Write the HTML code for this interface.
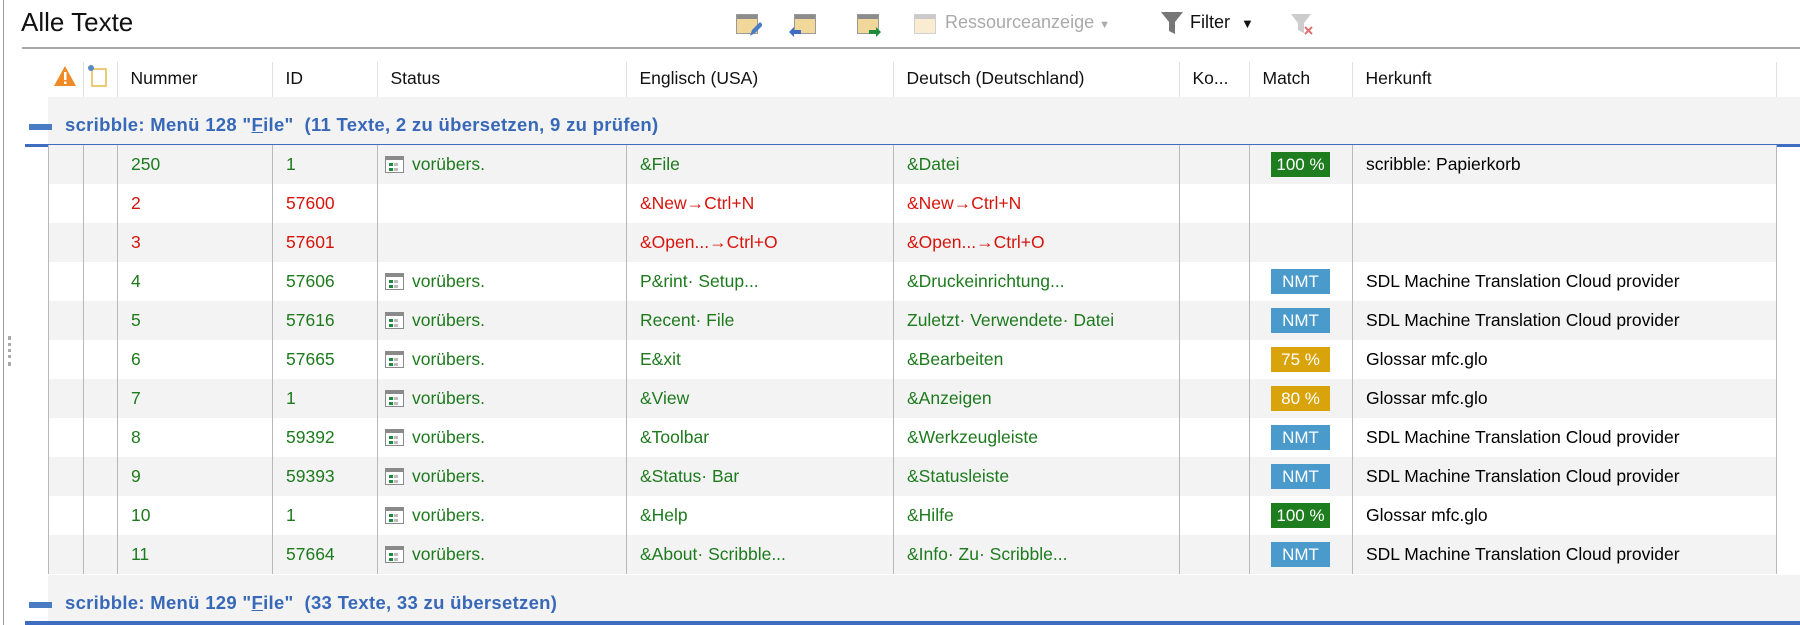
<!DOCTYPE html>
<html><head><meta charset="utf-8"><style>
*{margin:0;padding:0;box-sizing:border-box}
body{width:1800px;height:625px;background:#fff;font-family:"Liberation Sans",Arial,sans-serif;position:relative;overflow:hidden;color:#000}
.abs{position:absolute}
.title{left:21px;top:7px;font-size:26px;white-space:nowrap;color:#111}
.sep{left:22px;top:47px;width:1778px;height:2px;background:#a8a8a8}
.lb{left:3px;top:0;width:1px;height:625px;background:#9a9a9a}
.tb{top:12px;font-size:18px;white-space:nowrap}
table{position:absolute;left:48px;top:50px;border-collapse:collapse;table-layout:fixed;font-size:17.5px}
td{white-space:nowrap;overflow:hidden;padding-left:13px;vertical-align:middle}
tr.r td{height:39px;border-right:1px solid #b8b8b8;color:#1d7a1d}
tr.r td:first-child{border-left:1px solid #b8b8b8}
tr.r.red td{color:#d7140c}
tr.r:nth-child(odd) td{background:#f3f3f3}
tr.h td{height:47px;color:#111;font-size:17.5px;position:relative;padding-top:10px}
.hs{position:absolute;right:0;top:12px;width:1px;height:35px;background:#e0e0e0}
.grp{position:absolute;left:48px;width:1752px;height:48px;background:#f3f3f3}
.gline{position:absolute;left:25px;width:1775px;height:3px;background:#3d6cc0}
.gmin{position:absolute;left:29px;width:23px;height:6px;background:#4a7cc4}
.gtxt{position:absolute;left:65px;font-size:18.5px;font-weight:bold;color:#3868b8;white-space:nowrap;letter-spacing:0.3px}
.st{display:inline-block;width:19px;height:17px;border:1px solid #8a8a8a;background:#fff;vertical-align:-3px;margin-right:8px;position:relative;margin-left:-6px}
.st:before{content:"";position:absolute;left:0;top:0;width:17px;height:3px;background:#8a8a8a}
.st:after{content:"";position:absolute;left:3px;top:6px;width:4px;height:3px;background:#1d8a3d;box-shadow:5px 0 0 #bbb,0 5px 0 #1d8a3d,5px 5px 0 #bbb}
.b{display:inline-block;width:59px;height:25px;line-height:25px;text-align:center;color:#fff;font-size:17px;margin-left:8px}
.g{background:#1e7d1e}.n{background:#4a9bcc}.y{background:#d9a30c}
.ic{position:absolute;top:14px;width:22px;height:20px;border:1px solid #999;background:#f2d79a}
.ic:before{content:"";position:absolute;left:0;top:0;width:20px;height:4px;background:#8c8c8c}
</style></head><body>
<div class="abs lb"></div>
<div class="abs title">Alle Texte</div>
<div class="abs sep"></div>
<div class="ic" style="left:736px"></div>
<svg class="abs" style="left:748px;top:20px" width="14" height="18"><path d="M2 16l2-6 8-8 3 3-8 8z" fill="#4a7cc4"/></svg>
<div class="ic" style="left:794px"></div>
<svg class="abs" style="left:788px;top:26px" width="14" height="12"><path d="M1 6l5-5v3h7v4H6v3z" fill="#3d6cc0"/></svg>
<div class="ic" style="left:857px"></div>
<svg class="abs" style="left:868px;top:26px" width="14" height="12"><path d="M13 6l-5-5v3H1v4h7v3z" fill="#1d8a3d"/></svg>
<div class="ic" style="left:914px;top:14px;opacity:.45"></div>
<div class="abs tb" style="left:945px;color:#aaa">Ressourceanzeige <span style="font-size:11px">▼</span></div>
<svg class="abs" style="left:1160px;top:10px" width="24" height="26"><path d="M1 2h22l-8 10v12l-6-3v-9z" fill="#777"/></svg>
<div class="abs tb" style="left:1190px;color:#111">Filter <span style="font-size:13px;margin-left:6px">▼</span></div>
<svg class="abs" style="left:1290px;top:12px" width="26" height="26"><path d="M1 2h20l-7 9v10l-6-3v-7z" fill="#ccc"/><path d="M15 15l7 7M22 15l-7 7" stroke="#e07070" stroke-width="2"/></svg>
<div class="abs" style="left:8px;top:336px;width:3px;height:30px;border-left:3px dotted #aaa"></div>

<div class="grp" style="top:97px"></div>
<div class="gtxt" style="top:114px">scribble: Menü 128 "<u>F</u>ile"&nbsp; (11 Texte, 2 zu übersetzen, 9 zu prüfen)</div>
<div class="gmin" style="top:124px"></div>
<div class="gline" style="top:144px"></div>

<div class="grp" style="top:575px"></div>
<div class="gtxt" style="top:592px">scribble: Menü 129 "<u>F</u>ile"&nbsp; (33 Texte, 33 zu übersetzen)</div>
<div class="gmin" style="top:602px"></div>
<div class="gline" style="top:621px;height:4px"></div>

<table>
<colgroup><col style="width:35px"><col style="width:34px"><col style="width:155px"><col style="width:105px"><col style="width:249px"><col style="width:267px"><col style="width:286px"><col style="width:70px"><col style="width:103px"><col style="width:424px"></colgroup>
<tr class="h">
<td style="padding-left:4px"><svg width="24" height="22"><path d="M12 1L23 21H1z" fill="#f08a24"/><rect x="11" y="7" width="2.5" height="8" fill="#fff"/><rect x="11" y="16.5" width="2.5" height="2.5" fill="#fff"/></svg><span class="hs"></span></td>
<td style="padding-left:2px"><svg width="24" height="24"><rect x="6" y="5" width="14" height="17" fill="#fff" stroke="#e8b84a" stroke-width="1.5"/><circle cx="5" cy="4" r="3" fill="#5a8ac8"/></svg><span class="hs"></span></td>
<td>Nummer<span class="hs"></span></td><td>ID<span class="hs"></span></td><td>Status<span class="hs"></span></td><td>Englisch (USA)<span class="hs"></span></td><td>Deutsch (Deutschland)<span class="hs"></span></td><td>Ko...<span class="hs"></span></td><td>Match<span class="hs"></span></td><td>Herkunft<span class="hs"></span></td>
</tr>
<tr><td colspan="10" style="height:48px"></td></tr>
<tr class="r"><td></td><td></td><td>250</td><td>1</td><td><span class="st"></span>vorübers.</td><td>&amp;File</td><td>&amp;Datei</td><td></td><td><span class="b g">100 %</span></td><td style="color:#000">scribble: Papierkorb</td></tr>
<tr class="r red"><td></td><td></td><td>2</td><td>57600</td><td></td><td>&amp;New→Ctrl+N</td><td>&amp;New→Ctrl+N</td><td></td><td></td><td></td></tr>
<tr class="r red"><td></td><td></td><td>3</td><td>57601</td><td></td><td>&amp;Open...→Ctrl+O</td><td>&amp;Open...→Ctrl+O</td><td></td><td></td><td></td></tr>
<tr class="r"><td></td><td></td><td>4</td><td>57606</td><td><span class="st"></span>vorübers.</td><td>P&amp;rint· Setup...</td><td>&amp;Druckeinrichtung...</td><td></td><td><span class="b n">NMT</span></td><td style="color:#000">SDL Machine Translation Cloud provider</td></tr>
<tr class="r"><td></td><td></td><td>5</td><td>57616</td><td><span class="st"></span>vorübers.</td><td>Recent· File</td><td>Zuletzt· Verwendete· Datei</td><td></td><td><span class="b n">NMT</span></td><td style="color:#000">SDL Machine Translation Cloud provider</td></tr>
<tr class="r"><td></td><td></td><td>6</td><td>57665</td><td><span class="st"></span>vorübers.</td><td>E&amp;xit</td><td>&amp;Bearbeiten</td><td></td><td><span class="b y">75 %</span></td><td style="color:#000">Glossar mfc.glo</td></tr>
<tr class="r"><td></td><td></td><td>7</td><td>1</td><td><span class="st"></span>vorübers.</td><td>&amp;View</td><td>&amp;Anzeigen</td><td></td><td><span class="b y">80 %</span></td><td style="color:#000">Glossar mfc.glo</td></tr>
<tr class="r"><td></td><td></td><td>8</td><td>59392</td><td><span class="st"></span>vorübers.</td><td>&amp;Toolbar</td><td>&amp;Werkzeugleiste</td><td></td><td><span class="b n">NMT</span></td><td style="color:#000">SDL Machine Translation Cloud provider</td></tr>
<tr class="r"><td></td><td></td><td>9</td><td>59393</td><td><span class="st"></span>vorübers.</td><td>&amp;Status· Bar</td><td>&amp;Statusleiste</td><td></td><td><span class="b n">NMT</span></td><td style="color:#000">SDL Machine Translation Cloud provider</td></tr>
<tr class="r"><td></td><td></td><td>10</td><td>1</td><td><span class="st"></span>vorübers.</td><td>&amp;Help</td><td>&amp;Hilfe</td><td></td><td><span class="b g">100 %</span></td><td style="color:#000">Glossar mfc.glo</td></tr>
<tr class="r"><td></td><td></td><td>11</td><td>57664</td><td><span class="st"></span>vorübers.</td><td>&amp;About· Scribble...</td><td>&amp;Info· Zu· Scribble...</td><td></td><td><span class="b n">NMT</span></td><td style="color:#000">SDL Machine Translation Cloud provider</td></tr>
</table>
</body></html>
